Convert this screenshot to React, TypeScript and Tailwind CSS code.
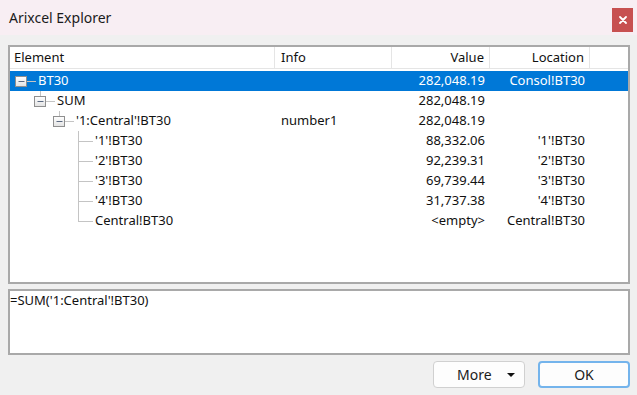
import React from "react";

type Row = {
  label: string;
  depth: number;
  expander: boolean;
  last?: boolean;
  info?: string;
  value?: string;
  location?: string;
  selected?: boolean;
};

const rows: Row[] = [
  { label: "BT30", depth: 0, expander: true, value: "282,048.19", location: "Consol!BT30", selected: true },
  { label: "SUM", depth: 1, expander: true, value: "282,048.19" },
  { label: "'1:Central'!BT30", depth: 2, expander: true, info: "number1", value: "282,048.19" },
  { label: "'1'!BT30", depth: 3, expander: false, value: "88,332.06", location: "'1'!BT30" },
  { label: "'2'!BT30", depth: 3, expander: false, value: "92,239.31", location: "'2'!BT30" },
  { label: "'3'!BT30", depth: 3, expander: false, value: "69,739.44", location: "'3'!BT30" },
  { label: "'4'!BT30", depth: 3, expander: false, value: "31,737.38", location: "'4'!BT30" },
  { label: "Central!BT30", depth: 3, expander: false, last: true, value: "<empty>", location: "Central!BT30" },
];

function Branch({ row }: { row: Row }) {
  const w = 28 + 19 * row.depth;
  const cx = 11 + 19 * row.depth;
  const line = "#c4c4c4";
  return (
    <svg width={w} height={20} className="shrink-0">
      {row.expander ? (
        <>
          <defs>
            <linearGradient id="expg" x1="0" y1="0" x2="0" y2="1">
              <stop offset="0" stopColor="#ffffff" />
              <stop offset="1" stopColor="#e2e2e2" />
            </linearGradient>
          </defs>
          {row.depth > 0 && <rect x={cx} y={0} width={1} height={5} fill={line} />}
          <rect x={cx - 5.5} y={5.5} width={11} height={10} fill="url(#expg)" stroke="#8f8f8f" />
          <rect x={cx - 2.5} y={10} width={6} height={1} fill="#5c6a82" />
          <rect x={cx + 6} y={10} width={w - 2 - (cx + 6)} height={1} fill={line} />
        </>
      ) : (
        <>
          <rect x={cx} y={0} width={1} height={row.last ? 11 : 20} fill={line} />
          <rect x={cx} y={10} width={w - 2 - cx} height={1} fill={line} />
        </>
      )}
    </svg>
  );
}

export default function App() {
  const font = { fontFamily: '"Noto Sans", "Liberation Sans", sans-serif' };
  return (
    <div className="w-[637px] h-[395px] bg-[#f0f0f0] flex flex-col overflow-hidden" style={font}>
      {/* Title bar */}
      <div className="h-[35px] bg-[#f8eef3] flex items-start justify-between pl-[9px] pr-[4px] shrink-0">
        <div className="text-[14px] leading-[20px] mt-[8px] text-[#1b1b1b]">Arixcel Explorer</div>
        <div className="w-[21px] h-[24px] mt-[8px] bg-[#c75050] flex items-center justify-center">
          <svg width="8" height="8" viewBox="0 0 8 8">
            <path d="M1 1 L7 7 M7 1 L1 7" stroke="#ffffff" strokeWidth="1.8" strokeLinecap="round" />
          </svg>
        </div>
      </div>

      {/* Body */}
      <div className="flex-1 flex flex-col pl-[8px] pr-[7px] pt-[10px]">
        {/* Tree */}
        <div className="h-[239px] border-2 border-[#a9a9a9] bg-white flex flex-col text-[13px] text-[#111]">
          <div className="h-[22px] flex border-b border-[#e5e5e5] shrink-0">
            <div className="w-[265px] border-r border-[#e5e5e5] pl-[4px] flex items-center">Element</div>
            <div className="w-[117px] border-r border-[#e5e5e5] pl-[6px] flex items-center">Info</div>
            <div className="w-[98px] border-r border-[#e5e5e5] pr-[5px] flex items-center justify-end">Value</div>
            <div className="w-[100px] border-r border-[#e5e5e5] pr-[5px] flex items-center justify-end">Location</div>
            <div className="flex-1" />
          </div>
          <div className="pt-[2px] flex flex-col">
            {rows.map((r, i) => (
              <div
                key={i}
                className={
                  "h-[20px] flex items-center " +
                  (r.selected ? "bg-[#0078d7] text-white" : "")
                }
              >
                <div className="w-[265px] flex items-center shrink-0">
                  <Branch row={r} />
                  <span className="whitespace-nowrap">{r.label}</span>
                </div>
                <div className="w-[117px] pl-[6px] whitespace-nowrap shrink-0">{r.info ?? ""}</div>
                <div className="w-[98px] pr-[5px] text-right whitespace-nowrap shrink-0">{r.value ?? ""}</div>
                <div className="w-[100px] pr-[5px] text-right whitespace-nowrap shrink-0">{r.location ?? ""}</div>
                <div className="flex-1" />
              </div>
            ))}
          </div>
        </div>

        {/* Formula box */}
        <div className="h-[66px] mt-[5px] border-2 border-[#a9a9a9] bg-white text-[13px] text-[#111] pl-0 pt-0 leading-[18px]">
          =SUM('1:Central'!BT30)
        </div>

        {/* Buttons */}
        <div className="mt-[6px] flex justify-end gap-[13px]">
          <div className="w-[92px] h-[27px] rounded-[4px] border border-[#d0d0d0] bg-[#fdfdfd] flex items-center pl-[23px] text-[14px] text-[#1b1b1b]">
            <span>More</span>
            <svg width="8" height="4" viewBox="0 0 8 4" className="ml-[15px]">
              <path d="M0 0 L8 0 L4 4 Z" fill="#111" />
            </svg>
          </div>
          <div className="w-[92px] h-[27px] rounded-[4px] border-2 border-[#74b4ec] bg-[#fdfdfd] flex items-center justify-center text-[14px] text-[#1b1b1b]">
            OK
          </div>
        </div>
      </div>
    </div>
  );
}
